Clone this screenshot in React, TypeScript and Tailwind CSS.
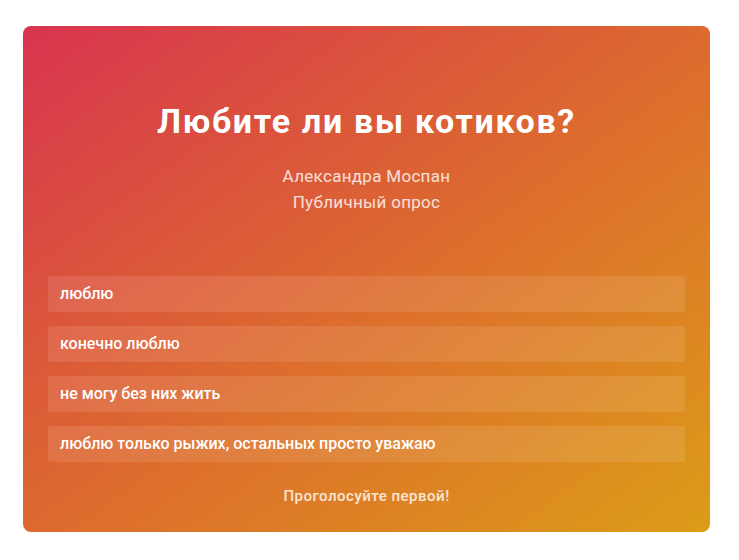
import React from "react";

const options = [
  "люблю",
  "конечно люблю",
  "не могу без них жить",
  "люблю только рыжих, остальных просто уважаю",
];

export default function App() {
  return (
    <div
      className="min-h-[560px] w-[739px] bg-white pl-[23px] pt-[26px]"
      style={{ fontFamily: "Roboto, 'Noto Sans', sans-serif" }}
    >
      <div className="flex h-[506px] w-[687px] flex-col rounded-[8px] bg-[linear-gradient(to_bottom_right,#d8344f,#dd6f2c_55%,#dc9c18)] px-[25px] pt-[75px] text-white">
        <h1 className="text-center text-[34px] font-bold leading-[40px] tracking-[1.7px]">
          Любите ли вы котиков?
        </h1>
        <div className="mt-[22px] text-center text-[17px] leading-[26px] tracking-[0.3px] text-white/80">
          <div>Александра Моспан</div>
          <div>Публичный опрос</div>
        </div>
        <div className="mt-[61px] flex flex-col gap-[14px]">
          {options.map((o) => (
            <div
              key={o}
              className="flex h-[36px] items-center rounded-[3px] bg-white/10 px-[12px] pb-[1px] text-[16px] font-medium"
            >
              {o}
            </div>
          ))}
        </div>
        <div className="mt-[24px] text-center text-[15px] font-medium leading-[20px] tracking-[0.5px] text-white/80">
          Проголосуйте первой!
        </div>
      </div>
    </div>
  );
}
